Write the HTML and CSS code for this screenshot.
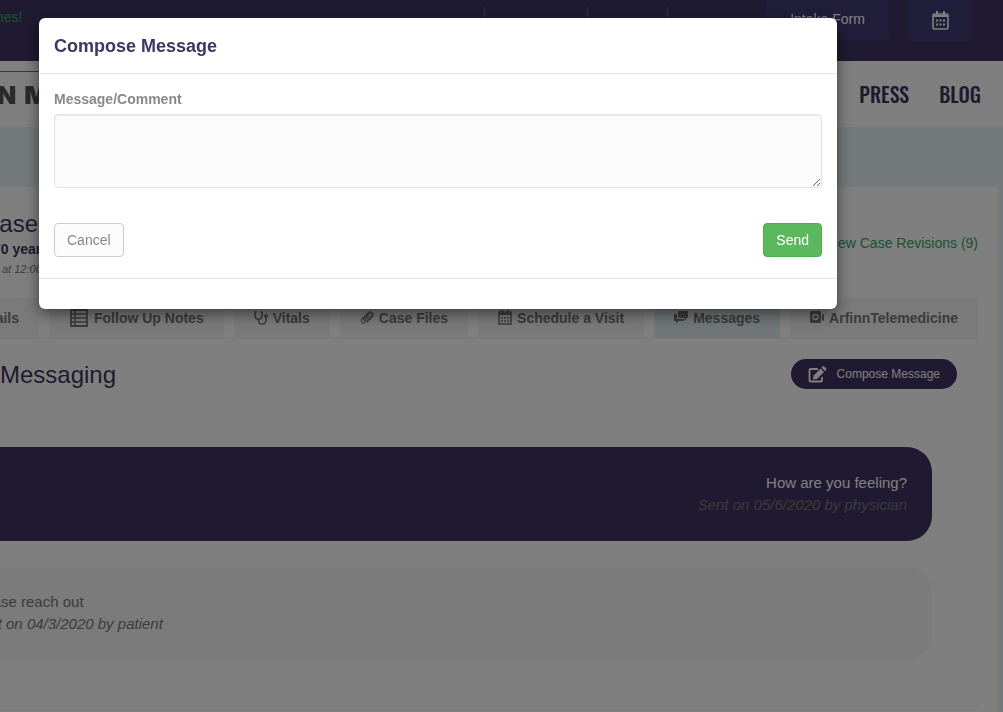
FILE: index.html
```html
<!DOCTYPE html>
<html lang="en">
<head>
    <meta charset="UTF-8">
    <meta name="viewport" content="width=device-width, initial-scale=1.0">
    <title>Compose Message</title>
    <link rel="stylesheet" href="styles.css">
</head>
<body>
    <div class="topbar">
        <span class="notice">mes!</span>
        <ul class="links"><li></li><li></li><li></li></ul>
        <a href="#" class="top-btn intake">Intake Form</a>
        <a href="#" class="top-btn calendar" aria-label="Calendar">
            <svg width="17" height="19" viewBox="0 0 17 19" fill="none" stroke="currentColor">
                <rect x="1" y="3" width="15" height="15" rx="1.500" stroke-width="1.600"/>
                <path stroke-width="2" d="M1 5h15M5 0v4M12 0v4"/>
                <path stroke-width="2" stroke-dasharray="2 1.500" d="M4 9.500h9M4 13.500h9"/>
            </svg>
        </a>
    </div>
    <div class="header">
        <div class="logo"><span>N</span><span>M</span></div>
        <nav><a href="#">PRESS</a><a href="#">BLOG</a></nav>
    </div>
    <div class="main">
        <div class="card">
            <div class="case">
                <div class="case-info">
                    <h2>Case</h2>
                    <p class="age">70 years</p>
                    <p class="date">at 12:00</p>
                </div>
                <a href="#" class="revisions">View Case Revisions (9)</a>
            </div>
            <div class="tabs">
                <a href="#">Details</a>
                <a href="#">
                    <svg width="20" height="18" viewBox="0 0 20 18" fill="none" stroke="currentColor">
                        <path stroke-width="1.800" d="M2 1h16v16H2z"/>
                        <path stroke-width="1.500" d="M6 1v16M2 5h16M2 9h16M2 13h16"/>
                    </svg>Follow Up Notes
                </a>
                <a href="#">
                    <svg width="14" height="14" viewBox="0 0 14 14" fill="none" stroke="currentColor" stroke-width="1.600">
                        <path d="M2.500 1H1v3.500C1 9.500 8 9.500 8 4.500V1H6.500M4.500 8.500v1c0 5 7.500 4.500 7.500 0V6"/>
                        <circle cx="12" cy="5" r="1.200"/>
                    </svg>Vitals
                </a>
                <a href="#">
                    <svg width="14" height="14" viewBox="0 0 14 14" fill="none" stroke="currentColor" stroke-width="1.100">
                        <path d="M9.500 4.500L5 9c-1 1-2.200-.2-1.200-1.200L8.600 3c2-2 4.600.6 2.600 2.600l-5.500 5.500c-2.800 2.800-6-.8-3.500-3.500L8 1.800c3-3 7 1.200 4.200 4.200L7 11.200"/>
                    </svg>Case Files
                </a>
                <a href="#">
                    <svg width="14" height="16" viewBox="0 0 14 16" fill="none" stroke="currentColor">
                        <rect x="1" y="2" width="12" height="12" stroke-width="1.500"/>
                        <path stroke-width="2" d="M1 4h12M4 0v3M10 0v3"/>
                        <path stroke-width="1.600" stroke-dasharray="2 1" d="M3 8h8M3 11h8"/>
                    </svg>Schedule a Visit
                </a>
                <a href="#" class="active">
                    <svg width="14" height="14" viewBox="0 0 14 14" fill="currentColor">
                        <path d="M5 0h8a1 1 0 0 1 1 1v5a1 1 0 0 1-1 1h-1v2.500L9.500 7H5a1 1 0 0 1-1-1V1a1 1 0 0 1 1-1z"/>
                        <path d="M3 3H1a1 1 0 0 0-1 1v5a1 1 0 0 0 1 1h1v2.500L4.500 10H9a1 1 0 0 0 1-1V8H4a1 1 0 0 1-1-1z"/>
                    </svg>Messages
                </a>
                <a href="#">
                    <svg width="14" height="14" viewBox="0 0 14 14" fill="currentColor">
                        <path fill-rule="evenodd" d="M1 0h9l1 1v10l-1 1H1l-1-1V1zM5.500 2.800a3.200 3.200 0 1 0 0 6.400 3.200 3.200 0 0 0 0-6.400zM12 4l2-1v7l-2-1z"/>
                        <circle cx="5.500" cy="6" r="1.800"/>
                    </svg>ArfinnTelemedicine
                </a>
            </div>
            <div class="panel">
                <div class="panel-head">
                    <h2>Messaging</h2>
                    <button type="button" class="compose">
                        <svg width="19" height="17" viewBox="0 0 19 17" fill="currentColor">
                            <path fill="none" stroke="currentColor" stroke-width="1.800" d="M10 3H2.500A1 1 0 0 0 1.500 4v10.500a1 1 0 0 0 1 1H13a1 1 0 0 0 1-1V11"/>
                            <path d="M5.500 9.500L12.500 2.500l3.500 3.500-7 7-4 .5zM13.500 1.500l1-1a1.200 1.200 0 0 1 1.700 0l1.800 1.800a1.200 1.200 0 0 1 0 1.700l-1 1z"/>
                        </svg>Compose Message
                    </button>
                </div>
                <div class="bubble sent">
                    <p>How are you feeling?</p>
                    <p><em>Sent on 05/6/2020 by physician</em></p>
                </div>
                <div class="bubble">
                    <p>Please reach out</p>
                    <p><em>Sent on 04/3/2020 by patient</em></p>
                </div>
            </div>
        </div>
    </div>

    <div class="overlay">
        <form class="modal" role="dialog" aria-labelledby="title">
            <div class="modal-header"><h4 id="title">Compose Message</h4></div>
            <div class="modal-body">
                <label for="message">Message/Comment</label>
                <textarea id="message"></textarea>
                <div class="actions">
                    <button type="button" class="btn">Cancel</button>
                    <button type="button" class="btn send">Send</button>
                </div>
            </div>
            <div class="modal-footer"></div>
        </form>
    </div>
</body>
</html>
```
FILE: styles.css
```css
*{
    margin: 0;
    padding: 0;
    box-sizing: border-box;
}
body{
    font-family: "Liberation Sans", Arial, sans-serif;
    font-size: 14px;
    line-height: 20px;
    color: #777;
    background: #e8f4f6;
    overflow: hidden;
}
a{
    text-decoration: none;
    color: inherit;
}
ul{
    list-style: none;
}
.topbar{
    display: flex;
    height: 61px;
    padding-right: 31px;
    background: #3e3562;
}
.notice{
    margin: 7px auto 0 -8px;
    color: #2fa866;
}
.links{
    display: flex;
    margin-top: 7px;
}
.links>li{
    width: 80px;
    height: 28px;
    border-left: 1px solid #6b60a0;
}
.links>li:first-child{
    width: 103px;
}
.links>li:last-child{
    width: 99px;
}
.top-btn{
    display: flex;
    justify-content: center;
    height: 40px;
    padding-top: 9px;
    color: #fff;
    background: #433c76;
    border-radius: 0 0 4px 4px;
}
.intake{
    width: 123px;
    margin-right: 19px;
}
.calendar{
    width: 64px;
    height: 41px;
    padding-top: 11px;
}
.header{
    display: flex;
    justify-content: space-between;
    align-items: center;
    height: 66px;
    padding-right: 22px;
    background: #fff;
}
.logo{
    display: flex;
    gap: 8px;
    width: 300px;
    height: 46px;
    margin-left: -3px;
    border-top: 1px solid #38917e;
    font-family: Inter, sans-serif;
    font-size: 25px;
    font-weight: 900;
    line-height: 46px;
    color: #555;
}
.header nav{
    display: flex;
    gap: 30px;
    font-family: Oswald, "Roboto Condensed", "Liberation Sans Narrow", "Liberation Sans", sans-serif;
    font-size: 20px;
    font-weight: 500;
    color: #3e3562;
}
.main{
    padding: 60px 5px 0 0;
}
.card{
    min-height: 560px;
    padding-right: 20px;
    background: #fff;
}
.case{
    display: flex;
    justify-content: space-between;
    height: 111px;
    padding-top: 22px;
}
h2{
    font-size: 24px;
    font-weight: normal;
    line-height: 30px;
    color: #3e3562;
}
.case h2{
    margin-left: -18px;
}
.age{
    margin-left: -7px;
    font-weight: bold;
    color: #3e3562;
}
.date{
    padding-left: 2px;
    font-size: 11px;
    font-style: italic;
}
.revisions{
    padding-top: 24px;
    color: #2fa866;
}
.tabs{
    display: flex;
    justify-content: flex-end;
    gap: 10px;
}
.tabs>a{
    display: flex;
    align-items: center;
    gap: 5px;
    height: 40px;
    padding: 0 20px;
    white-space: nowrap;
    font-weight: bold;
    background: #f5f5f5;
    border-radius: 3px 3px 0 0;
}
.tabs>.active{
    background: #e2eff2;
}
.panel{
    padding: 20px 20px 46px 0;
    border: 1px solid #f0f2f2;
    border-left: 0;
    border-radius: 0 3px 3px 0;
}
.panel-head{
    display: flex;
    justify-content: space-between;
    margin-bottom: 56px;
}
.panel-head h2{
    line-height: 32px;
}
button{
    font-family: inherit;
    cursor: pointer;
}
.compose{
    display: flex;
    align-items: center;
    gap: 10px;
    height: 30px;
    padding: 0 17px;
    font-size: 12px;
    color: #fff;
    background: #3e3562;
    border: 0;
    border-radius: 15px;
}
.bubble{
    min-height: 94px;
    margin: 0 25px 26px -54px;
    padding: 25px;
    font-size: 15px;
    line-height: 22px;
    background: #f7f7f7;
    border-radius: 25px;
}
.bubble:last-child{
    min-height: 92px;
    margin-bottom: 0;
    padding-top: 24px;
}
.sent{
    text-align: right;
    color: #fff;
    background: #3e3562;
}
.sent em{
    color: #777;
}
.overlay{
    position: fixed;
    inset: 0;
    padding: 18px 166px 0 39px;
    background: rgba(0,0,0,.5);
}
.modal{
    background: #fff;
    border-radius: 6px;
    box-shadow: 0 5px 15px rgba(0,0,0,.5), 0 0 1px rgba(0,0,0,.5);
}
.modal-header{
    padding: 15px 15px 13px;
    border-bottom: 1px solid #e5e5e5;
}
.modal-header h4{
    font-size: 18px;
    line-height: 27px;
    color: #3e3562;
}
.modal-body{
    padding: 15px 15px 21px;
}
.modal-body label{
    display: block;
    margin-bottom: 5px;
    font-weight: bold;
    color: #888;
}
textarea{
    display: block;
    width: 100%;
    height: 74px;
    padding: 6px 12px;
    font: inherit;
    background: #fcfcfc;
    border: 1px solid #e2e2e2;
    border-radius: 4px;
    box-shadow: inset 0 1px 1px rgba(0,0,0,.075);
    resize: vertical;
}
.actions{
    display: flex;
    justify-content: space-between;
    margin-top: 35px;
}
.btn{
    height: 34px;
    padding: 0 12px;
    font-size: 14px;
    color: #888;
    background: #fcfcfc;
    border: 1px solid #ccc;
    border-radius: 4px;
}
.send{
    color: #fff;
    background: #5cb85c;
    border-color: #4cae4c;
}
.modal-footer{
    height: 31px;
    border-top: 1px solid #e5e5e5;
}
```
